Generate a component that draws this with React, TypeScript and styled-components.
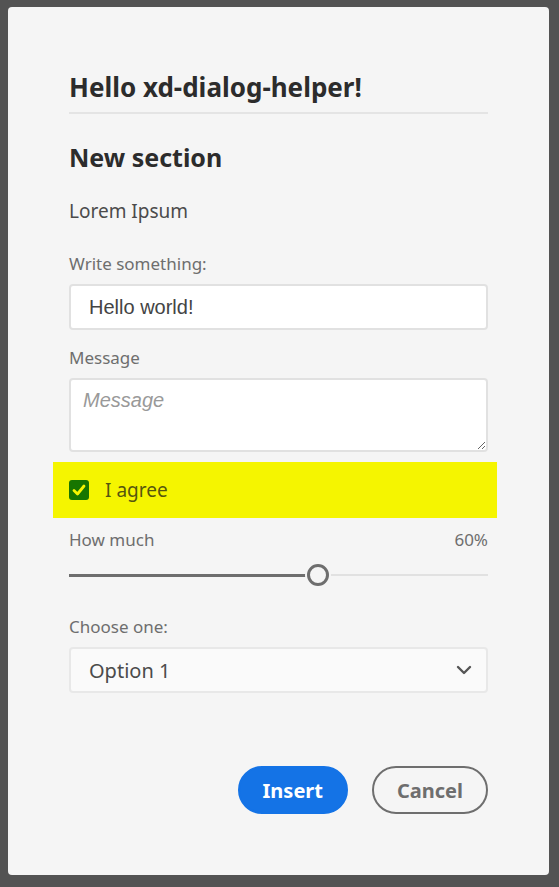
import React, { FC } from "react";
import styled, { createGlobalStyle } from "styled-components";

const COLORS = {
  backdrop: "#535353",
  dialog: "#f5f5f5",
  heading: "#2c2c2c",
  text: "#4b4b4b",
  label: "#6e6e6e",
  border: "#e1e1e1",
  blue: "#1473e6",
  yellow: "#f5f500",
  green: "#177500",
};

const SANS = `"Noto Sans", "Open Sans", sans-serif`;
const ARIAL = `"Liberation Sans", Arial, sans-serif`;

const GlobalStyle = createGlobalStyle`
  html, body {
    margin: 0;
    padding: 0;
    background: ${COLORS.backdrop};
  }
  * {
    box-sizing: border-box;
  }
`;

const Page = styled.div`
  min-height: 887px;
  padding: 7px 10px 12px 8px;
  display: flex;
`;

const Dialog = styled.form`
  flex: 1;
  background: ${COLORS.dialog};
  border-radius: 4px;
  padding: 64px 61px 60px 61px;
  display: flex;
  flex-direction: column;
  font-family: ${SANS};
`;

const Title = styled.h1`
  margin: 0;
  font-size: 26px;
  line-height: 32px;
  font-weight: 700;
  color: ${COLORS.heading};
  padding-bottom: 9px;
  border-bottom: 2px solid #e4e4e4;
`;

const SectionTitle = styled.h2`
  margin: 27px 0 0;
  font-size: 25px;
  line-height: 32px;
  font-weight: 700;
  color: ${COLORS.heading};
`;

const Paragraph = styled.p`
  margin: 26px 0 0;
  font-size: 19px;
  line-height: 24px;
  color: ${COLORS.text};
`;

const Label = styled.label<{ $top: number }>`
  display: block;
  margin-top: ${(p) => p.$top}px;
  font-size: 17px;
  line-height: 22px;
  color: ${COLORS.label};
`;

const TextInput = styled.input`
  margin-top: 9px;
  width: 100%;
  height: 46px;
  border: 2px solid ${COLORS.border};
  border-radius: 4px;
  background: #fff;
  padding: 0 18px;
  font-family: ${ARIAL};
  font-size: 20px;
  color: #444;
  outline: none;
`;

const TextArea = styled.textarea`
  margin-top: 9px;
  width: 100%;
  height: 74px;
  border: 2px solid ${COLORS.border};
  border-radius: 4px;
  background: #fff;
  padding: 9px 12px;
  font-family: ${ARIAL};
  font-size: 20px;
  color: #444;
  outline: none;
  resize: both;
  display: block;

  &::placeholder {
    color: #999;
    font-style: italic;
  }
`;

const AgreeRow = styled.label`
  margin: 10px -9px 0 -16px;
  height: 56px;
  padding: 0 16px;
  background: ${COLORS.yellow};
  display: flex;
  align-items: center;
  gap: 16px;
  font-size: 19px;
  color: #55550f;
`;

const CheckBox = styled.span`
  width: 20px;
  height: 20px;
  border-radius: 3px;
  background: ${COLORS.green};
  display: flex;
  align-items: center;
  justify-content: center;
`;

const SliderHeader = styled.div`
  margin-top: 11px;
  display: flex;
  justify-content: space-between;
  font-size: 17px;
  line-height: 22px;
  color: ${COLORS.label};
`;

const SliderTrack = styled.div`
  margin-top: 12px;
  height: 24px;
  position: relative;
  display: flex;
  align-items: center;

  &::before {
    content: "";
    position: absolute;
    left: 0;
    right: 0;
    height: 2px;
    background: #e1e1e1;
  }
`;

const SliderFill = styled.div`
  position: relative;
  height: 3px;
  background: ${COLORS.label};
`;

const SliderThumb = styled.div`
  position: absolute;
  top: 1px;
  width: 22px;
  height: 22px;
  margin-left: -11px;
  border-radius: 50%;
  border: 3px solid ${COLORS.label};
  background: ${COLORS.dialog};
  box-shadow: 0 0 0 2px ${COLORS.dialog};
`;

const Select = styled.div`
  margin-top: 9px;
  height: 46px;
  border: 2px solid #e8e8e8;
  border-radius: 4px;
  background: #fafafa;
  padding: 0 14px 0 18px;
  display: flex;
  align-items: center;
  justify-content: space-between;
  font-size: 20px;
  color: ${COLORS.text};
`;

const Footer = styled.div`
  margin-top: 73px;
  display: flex;
  justify-content: flex-end;
  gap: 24px;
`;

const Button = styled.button<{ $variant: "cta" | "secondary" }>`
  height: 48px;
  padding: 0 23px;
  border-radius: 24px;
  font-family: ${SANS};
  font-size: 20px;
  font-weight: 700;
  cursor: pointer;
  border: 2px solid
    ${(p) => (p.$variant === "cta" ? COLORS.blue : COLORS.label)};
  background: ${(p) => (p.$variant === "cta" ? COLORS.blue : "transparent")};
  color: ${(p) => (p.$variant === "cta" ? "#fff" : COLORS.label)};
`;

const Slider: FC<{ value: number }> = ({ value }) => (
  <SliderTrack>
    <SliderFill style={{ width: `${value}%` }} />
    <SliderThumb style={{ left: `${value}%` }} />
  </SliderTrack>
);

const App: FC = () => {
  const howMuch = 59.5;

  return (
    <>
      <GlobalStyle />
      <Page>
        <Dialog onSubmit={(e) => e.preventDefault()}>
          <Title>Hello xd-dialog-helper!</Title>
          <SectionTitle>New section</SectionTitle>
          <Paragraph>Lorem Ipsum</Paragraph>

          <Label $top={30}>Write something:</Label>
          <TextInput defaultValue="Hello world!" />

          <Label $top={17}>Message</Label>
          <TextArea placeholder="Message" />

          <AgreeRow>
            <CheckBox>
              <svg width="14" height="12" viewBox="0 0 14 12">
                <path
                  d="M2 6.5 L5.5 10 L12 2"
                  fill="none"
                  stroke={COLORS.yellow}
                  strokeWidth="2.8"
                  strokeLinecap="round"
                  strokeLinejoin="round"
                />
              </svg>
            </CheckBox>
            I agree
          </AgreeRow>

          <SliderHeader>
            <span>How much</span>
            <span>60%</span>
          </SliderHeader>
          <Slider value={howMuch} />

          <Label $top={29}>Choose one:</Label>
          <Select>
            <span>Option 1</span>
            <svg width="16" height="10" viewBox="0 0 16 10">
              <path
                d="M2 2 L8 8 L14 2"
                fill="none"
                stroke="#555"
                strokeWidth="2.4"
                strokeLinecap="round"
                strokeLinejoin="round"
              />
            </svg>
          </Select>

          <Footer>
            <Button $variant="cta" type="submit">
              Insert
            </Button>
            <Button $variant="secondary" type="button">
              Cancel
            </Button>
          </Footer>
        </Dialog>
      </Page>
    </>
  );
};

export default App;
